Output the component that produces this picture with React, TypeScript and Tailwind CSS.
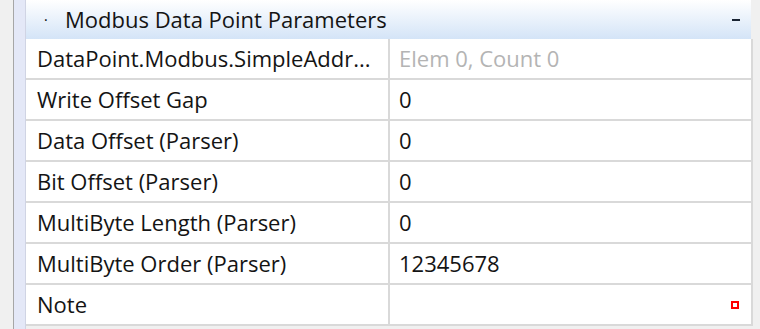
const rows: { label: string; value: string; muted?: boolean; note?: boolean }[] = [
  { label: 'DataPoint.Modbus.SimpleAddr...', value: 'Elem 0, Count 0', muted: true },
  { label: 'Write Offset Gap', value: '0' },
  { label: 'Data Offset (Parser)', value: '0' },
  { label: 'Bit Offset (Parser)', value: '0' },
  { label: 'MultiByte Length (Parser)', value: '0' },
  { label: 'MultiByte Order (Parser)', value: '12345678' },
  { label: 'Note', value: '', note: true },
]

function Row({ label, value, muted, note }: { label: string; value: string; muted?: boolean; note?: boolean }) {
  return (
    <div className="flex h-[41px] border-b-2 border-[#d9d9d9] bg-white">
      <div className="flex w-[364px] shrink-0 items-center border-r-2 border-[#d9d9d9] pl-[11px] text-[#141414]">
        {label}
      </div>
      <div className={`flex flex-1 items-center justify-between pl-[9px] pr-[12px] ${muted ? 'text-[#b4b4b4]' : 'text-[#141414]'}`}>
        <span>{value}</span>
        {note && <span className="h-[8px] w-[8px] border-2 border-[#ff0000]" />}
      </div>
    </div>
  )
}

export default function App() {
  return (
    <div
      className="flex h-[329px] w-[760px] overflow-hidden bg-[#f0f0f0] text-[22px]"
      style={{ fontFamily: '"Open Sans", "Noto Sans", sans-serif' }}
    >
      <div className="w-[13px] shrink-0 bg-[#f0f0f0]" />
      <div className="w-px shrink-0 bg-[#a6a6a6]" />
      <div className="w-[12px] shrink-0 border-r border-[#d0d4e4] bg-[#e4e8f7]" />

      <div className="flex w-[725px] shrink-0 flex-col">
        <div className="flex h-[39px] items-center bg-gradient-to-b from-white to-[#d4e4f7] pr-[11px]">
          <span className="w-[39px] pl-[18px] text-[14px] leading-none">·</span>
          <span className="text-[#141414]">Modbus Data Point Parameters</span>
          <span className="ml-auto h-[2px] w-[8px] bg-[#1a2433]" />
        </div>
        <div className="mr-[-2px] border-r-2 border-[#d9d9d9]">
          {rows.map((r) => (
            <Row key={r.label} {...r} />
          ))}
        </div>
      </div>
    </div>
  )
}
